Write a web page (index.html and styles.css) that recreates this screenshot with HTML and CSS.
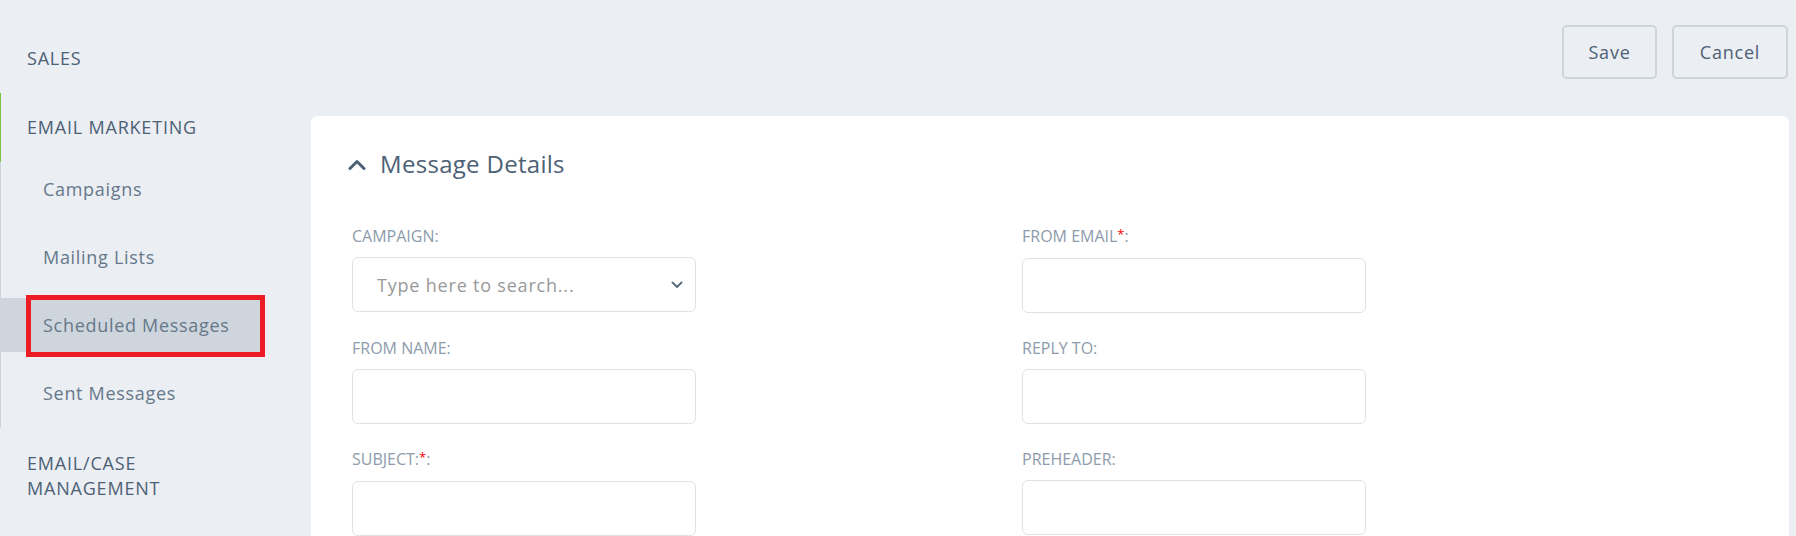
FILE: index.html
```html
<!DOCTYPE html>
<html lang="en">
<head>
<meta charset="utf-8">
<title>Message Details</title>
<link rel="stylesheet" href="styles.css">
</head>
<body>
<div class="app">
  <nav class="sidebar">
    <div class="nav-group">
      <div class="nav-head">SALES</div>
    </div>
    <div class="nav-group open">
      <div class="nav-head current">EMAIL MARKETING</div>
      <ul class="nav-sub">
        <li class="nav-item">Campaigns</li>
        <li class="nav-item">Mailing Lists</li>
        <li class="nav-item active">Scheduled Messages</li>
        <li class="nav-item">Sent Messages</li>
      </ul>
    </div>
    <div class="nav-group">
      <div class="nav-head multi">EMAIL/CASE<br>MANAGEMENT</div>
    </div>
  </nav>

  <main class="main">
    <div class="toolbar">
      <button class="btn btn-save" type="button">Save</button>
      <button class="btn btn-cancel" type="button">Cancel</button>
    </div>

    <section class="card">
      <h2 class="section-title">
        <svg class="chev-up" width="18" height="11" viewBox="0 0 18 11" aria-hidden="true"><path d="M2 9.5 L9 2.5 L16 9.5" fill="none" stroke="#4d6175" stroke-width="3" stroke-linecap="round" stroke-linejoin="round"/></svg>
        <span>Message Details</span>
      </h2>

      <div class="form-grid">
        <div class="field">
          <label class="field-label">CAMPAIGN:</label>
          <div class="select-box">
            <span class="placeholder">Type here to search...</span>
            <svg class="chev-down" width="12" height="8" viewBox="0 0 12 8" aria-hidden="true"><path d="M1.5 1.5 L6 6 L10.5 1.5" fill="none" stroke="#5d6e7f" stroke-width="2" stroke-linecap="round" stroke-linejoin="round"/></svg>
          </div>
        </div>
        <div class="field">
          <label class="field-label">FROM EMAIL<span class="req">*</span>:</label>
          <input class="text-input" type="text">
        </div>
        <div class="field">
          <label class="field-label">FROM NAME:</label>
          <input class="text-input" type="text">
        </div>
        <div class="field">
          <label class="field-label">REPLY TO:</label>
          <input class="text-input" type="text">
        </div>
        <div class="field">
          <label class="field-label">SUBJECT:<span class="req">*</span>:</label>
          <input class="text-input" type="text">
        </div>
        <div class="field">
          <label class="field-label">PREHEADER:</label>
          <input class="text-input" type="text">
        </div>
      </div>
    </section>
  </main>
</div>
</body>
</html>
```

FILE: styles.css
```css
*, *::before, *::after {
  box-sizing: border-box;
}

html, body {
  margin: 0;
  padding: 0;
  height: 100%;
  overflow: hidden;
}

body {
  background: #ebeef3;
  font-family: "Open Sans", "Liberation Sans", sans-serif;
  color: #4d6175;
}

.app {
  display: flex;
  align-items: flex-start;
  min-height: 100%;
}

/* ---------- Sidebar ---------- */
.sidebar {
  width: 311px;
  flex: 0 0 311px;
  padding-top: 24px;
}

.nav-head {
  display: flex;
  align-items: center;
  height: 69px;
  padding-left: 27px;
  font-size: 18px;
  line-height: 25px;
  letter-spacing: 0.8px;
  color: #4d6175;
}

.nav-head.current {
  border-left: 1px solid #7cc243;
  padding-left: 26px;
}

.nav-head.multi {
  height: auto;
  display: block;
  padding-top: 23px;
}

.nav-sub {
  list-style: none;
  margin: 0;
  padding: 0 0 8px 0;
  border-left: 1px solid #cbd2d9;
}

.nav-item {
  position: relative;
  display: flex;
  align-items: center;
  height: 54px;
  margin-right: 47px;
  margin-bottom: 14px;
  padding-left: 42px;
  font-size: 18px;
  letter-spacing: 0.7px;
  color: #66788a;
}

.nav-item:last-child {
  margin-bottom: 0;
}

.nav-item.active {
  background: #ced5dc;
  margin-left: -1px;
  padding-left: 43px;
}

/* red annotation frame drawn over the active item */
.nav-item.active::after {
  content: "";
  position: absolute;
  left: 26px;
  top: -3px;
  width: 239px;
  height: 62px;
  border: 5px solid #ed1c24;
}

/* ---------- Main ---------- */
.main {
  flex: 1;
  padding-right: 7px;
}

.toolbar {
  display: flex;
  justify-content: flex-end;
  gap: 15px;
  height: 116px;
  padding-top: 25px;
  padding-right: 1px;
}

.btn {
  height: 54px;
  border: 2px solid #cdd4db;
  border-radius: 5px;
  background: transparent;
  font-family: "Open Sans", "Liberation Sans", sans-serif;
  font-size: 18px;
  letter-spacing: 0.8px;
  color: #4d6175;
  padding: 0;
}

.btn-save {
  width: 95px;
}

.btn-cancel {
  width: 116px;
}

.card {
  background: #ffffff;
  border-radius: 6px 6px 0 0;
  padding: 30px 41px;
  height: 520px;
}

.section-title {
  display: flex;
  align-items: center;
  gap: 14px;
  margin: 0 0 44px -4px;
  height: 36px;
  font-size: 24px;
  line-height: 36px;
  font-weight: 400;
  letter-spacing: 0.3px;
  color: #4d6175;
}

.chev-up {
  display: block;
  margin-top: 1px;
}

.form-grid {
  display: grid;
  grid-template-columns: 670px 670px;
  row-gap: 25px;
}

.field {
  display: flex;
  flex-direction: column;
  align-items: flex-start;
}

.field-label {
  font-size: 16px;
  line-height: 20px;
  color: #8d9bab;
  margin-bottom: 11px;
}

.req {
  color: #ff0000;
  font-size: 13px;
  position: relative;
  top: -3px;
}

.text-input,
.select-box {
  width: 344px;
  height: 55px;
  border: 1px solid #dde2e8;
  border-radius: 6px;
  background: #ffffff;
  font-family: "Open Sans", "Liberation Sans", sans-serif;
  font-size: 18px;
  outline: none;
}

.select-box {
  display: flex;
  align-items: center;
  justify-content: space-between;
  padding: 0 12px 0 24px;
}

.placeholder {
  color: #999999;
  letter-spacing: 0.8px;
  font-size: 18px;
}

.chev-down {
  display: block;
}
```
